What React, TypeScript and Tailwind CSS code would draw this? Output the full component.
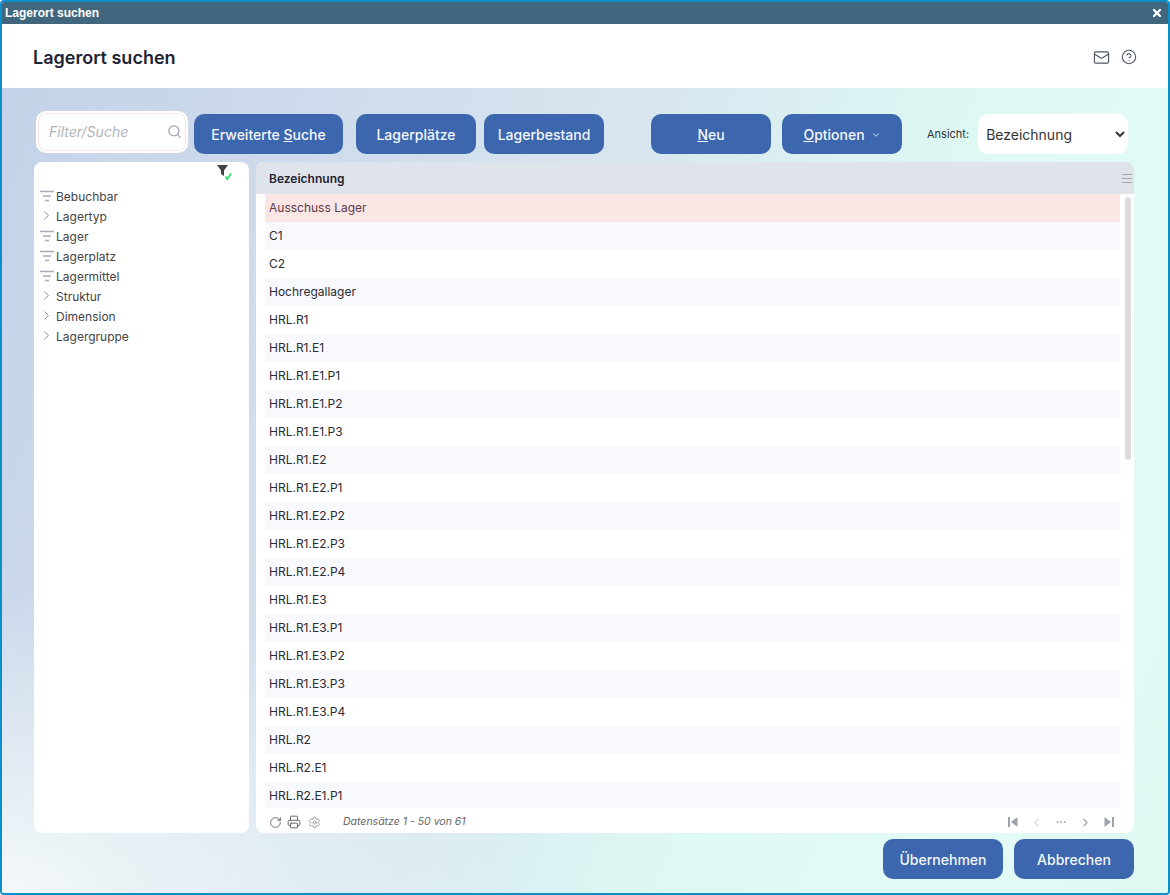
import { useState } from "react";
import {
  ChevronDown,
  ChevronLeft,
  ChevronRight,
  CircleHelp,
  Ellipsis,
  Mail,
  Printer,
  RotateCw,
  Search,
  Settings,
  X,
} from "lucide-react";

const rows = [
  "Ausschuss Lager",
  "C1",
  "C2",
  "Hochregallager",
  "HRL.R1",
  "HRL.R1.E1",
  "HRL.R1.E1.P1",
  "HRL.R1.E1.P2",
  "HRL.R1.E1.P3",
  "HRL.R1.E2",
  "HRL.R1.E2.P1",
  "HRL.R1.E2.P2",
  "HRL.R1.E2.P3",
  "HRL.R1.E2.P4",
  "HRL.R1.E3",
  "HRL.R1.E3.P1",
  "HRL.R1.E3.P2",
  "HRL.R1.E3.P3",
  "HRL.R1.E3.P4",
  "HRL.R2",
  "HRL.R2.E1",
  "HRL.R2.E1.P1",
];

const facets = [
  { label: "Bebuchbar", kind: "filter" },
  { label: "Lagertyp", kind: "tree" },
  { label: "Lager", kind: "filter" },
  { label: "Lagerplatz", kind: "filter" },
  { label: "Lagermittel", kind: "filter" },
  { label: "Struktur", kind: "tree" },
  { label: "Dimension", kind: "tree" },
  { label: "Lagergruppe", kind: "tree" },
];

function FilterLines() {
  return (
    <svg width="14" height="12" viewBox="0 0 14 12" fill="none" stroke="#a8adb5" strokeWidth="1.3" className="-mt-[3px] ml-px">
      <path d="M0 1.5h14M3 6h8M5 10.5h4" />
    </svg>
  );
}

function ActiveFilter() {
  return (
    <svg width="16" height="16" viewBox="0 0 16 16">
      <path d="M0 0h11L7 5.5V11L4 9V5.5z" fill="#444" />
      <path d="M8.5 11.5l1.7 2.6L14 8.5" fill="none" stroke="#22e35f" strokeWidth="1.6" />
    </svg>
  );
}

function PagerEdge({ flip }: { flip?: boolean }) {
  return (
    <svg width="10" height="10" viewBox="0 0 10 10" fill="#9ca3af" className={flip ? "rotate-180" : ""}>
      <path d="M0 0h2v10H0zM9.5 0v10L3 5z" />
    </svg>
  );
}

function ActionButton({ children, className }: { children: React.ReactNode; className: string }) {
  return (
    <button className={`h-10 rounded-[10px] bg-[#3c66ae] pt-px text-[14px] font-medium text-[#f4f7fb] ${className}`}>
      {children}
    </button>
  );
}

export default function App() {
  const [view, setView] = useState("Bezeichnung");

  return (
    <div className="flex h-[895px] w-[1170px] flex-col overflow-hidden rounded-[4px] border-2 border-[#0b8fcb] bg-white font-['Inter',sans-serif] text-[#333]">
      <div className="flex h-[22px] shrink-0 items-center justify-between bg-[#41677f] pl-[3px] pr-[5px]">
        <span className="font-['Liberation_Sans',sans-serif] text-[12px] font-bold text-white">Lagerort suchen</span>
        <X size={12} strokeWidth={4.5} className="text-white" />
      </div>

      <div className="flex h-[64px] shrink-0 items-center justify-between pl-[31px] pr-[31px] pt-[2px]">
        <h1 className="text-[18px] font-semibold text-[#1d2433]">Lagerort suchen</h1>
        <div className="flex items-center gap-[11px] text-[#4b5563]">
          <Mail size={17} strokeWidth={1.6} />
          <CircleHelp size={16} strokeWidth={1.6} />
        </div>
      </div>

      <div className="flex min-h-0 flex-1 flex-col bg-[radial-gradient(ellipse_500px_300px_at_0%_100%,rgba(245,250,250,0.95),rgba(245,250,250,0)),linear-gradient(112deg,#c4d2e9_0%,#cfdcec_24%,#d8e6ef_44%,#def8f4_66%,#e3fbf7_85%,#dff8f2_100%)] pl-[32px] pr-[34px] pt-[23px]">
        <div className="flex h-[43px] shrink-0 items-start">
          <div className="ml-[2px] flex h-[42px] w-[152px] items-center justify-between rounded-[10px] border-2 border-white bg-white pl-[11px] pr-[4px] shadow-[inset_0_0_0_1px_#fbe3e1]">
            <span className="pb-[2px] text-[14px] italic text-[#b0b4ba]">Filter/Suche</span>
            <Search size={15} className="mb-[2px] text-[#9ca3af]" />
          </div>
          <ActionButton className="ml-[6px] mt-[3px] w-[149px]">
            Erweiterte <u>S</u>uche
          </ActionButton>
          <ActionButton className="ml-[13px] mt-[3px] w-[120px]">Lagerplätze</ActionButton>
          <ActionButton className="ml-[8px] mt-[3px] w-[120px]">Lagerbestand</ActionButton>
          <ActionButton className="ml-[47px] mt-[3px] w-[120px]">
            <u>N</u>eu
          </ActionButton>
          <ActionButton className="ml-[11px] mt-[3px] flex w-[120px] items-center justify-center gap-[6px]">
            <span>
              <u>O</u>ptionen
            </span>
            <ChevronDown size={10} />
          </ActionButton>
          <span className="ml-[25px] mt-[15px] text-[11px] text-[#333]">Ansicht:</span>
          <select
            value={view}
            onChange={(e) => setView(e.target.value)}
            className="ml-[9px] mt-[3px] h-10 w-[150px] rounded-[10px] bg-white pl-[4px] pr-[4px] text-[14px] text-[#333]"
          >
            <option>Bezeichnung</option>
          </select>
        </div>

        <div className="mt-[8px] flex h-[671px] shrink-0 gap-[7px]">
          <aside className="w-[215px] shrink-0 rounded-[8px] bg-white">
            <div className="flex h-[25px] justify-end pr-[16px] pt-[3px]">
              <ActiveFilter />
            </div>
            <ul>
              {facets.map((f) => (
                <li key={f.label} className="flex h-5 items-center text-[12px] text-[#444]">
                  <span className="flex w-[22px] justify-center pl-[2px]">
                    {f.kind === "filter" ? (
                      <FilterLines />
                    ) : (
                      <ChevronRight size={15} strokeWidth={1.2} className="-mt-[3px] text-[#666]" />
                    )}
                  </span>
                  {f.label}
                </li>
              ))}
            </ul>
          </aside>

          <section className="flex min-w-0 flex-1 flex-col overflow-hidden rounded-[8px] bg-white">
            <div className="flex h-8 shrink-0 items-center justify-between bg-[#dfe3eb] pl-[13px] pr-[2px] pt-px">
              <span className="text-[12px] font-semibold text-[#1f2430]">Bezeichnung</span>
              <svg width="10" height="9" viewBox="0 0 10 9" stroke="#a3a8b0" strokeWidth="1">
                <path d="M0 .5h10M0 4.5h10M0 8.5h10" />
              </svg>
            </div>
            <div className="flex min-h-0 flex-1">
              <div className="min-w-0 flex-1 overflow-hidden pl-[9px]">
                {rows.map((name, i) => (
                  <div
                    key={name}
                    className={`flex h-7 items-center pl-1 text-[12px] ${
                      i === 0
                        ? "bg-[#fae6e4] text-[#5b3a4a]"
                        : i % 2 === 1
                          ? "bg-[#f7f9fd] text-[#2b2b33]"
                          : "bg-white text-[#2b2b33]"
                    }`}
                  >
                    {name}
                  </div>
                ))}
              </div>
              <div className="w-[14px] shrink-0 pl-[5px] pr-[3px] pt-[3px]">
                <div className="h-[263px] rounded-full bg-[#dcdcdc]" />
              </div>
            </div>
            <div className="flex h-[25px] shrink-0 items-center pl-[13px] pr-[20px] pt-[3px]">
              <RotateCw size={13} strokeWidth={1.5} className="text-[#555]" />
              <Printer size={14} strokeWidth={1.5} className="ml-[5px] text-[#555]" />
              <Settings size={13} strokeWidth={1.3} className="ml-[7px] text-[#777]" />
              <span className="ml-[22px] text-[10.5px] italic text-[#666]">Datensätze 1 - 50 von 61</span>
              <div className="ml-auto flex items-center gap-[12px]">
                <PagerEdge />
                <ChevronLeft size={13} className="text-[#d6d9de]" />
                <Ellipsis size={12} className="text-[#9ca3af]" />
                <ChevronRight size={13} className="text-[#9ca3af]" />
                <PagerEdge flip />
              </div>
            </div>
          </section>
        </div>

        <div className="mt-[6px] flex justify-end gap-[11px]">
          <ActionButton className="w-[120px]">Übernehmen</ActionButton>
          <ActionButton className="w-[120px]">Abbrechen</ActionButton>
        </div>
      </div>
    </div>
  );
}
